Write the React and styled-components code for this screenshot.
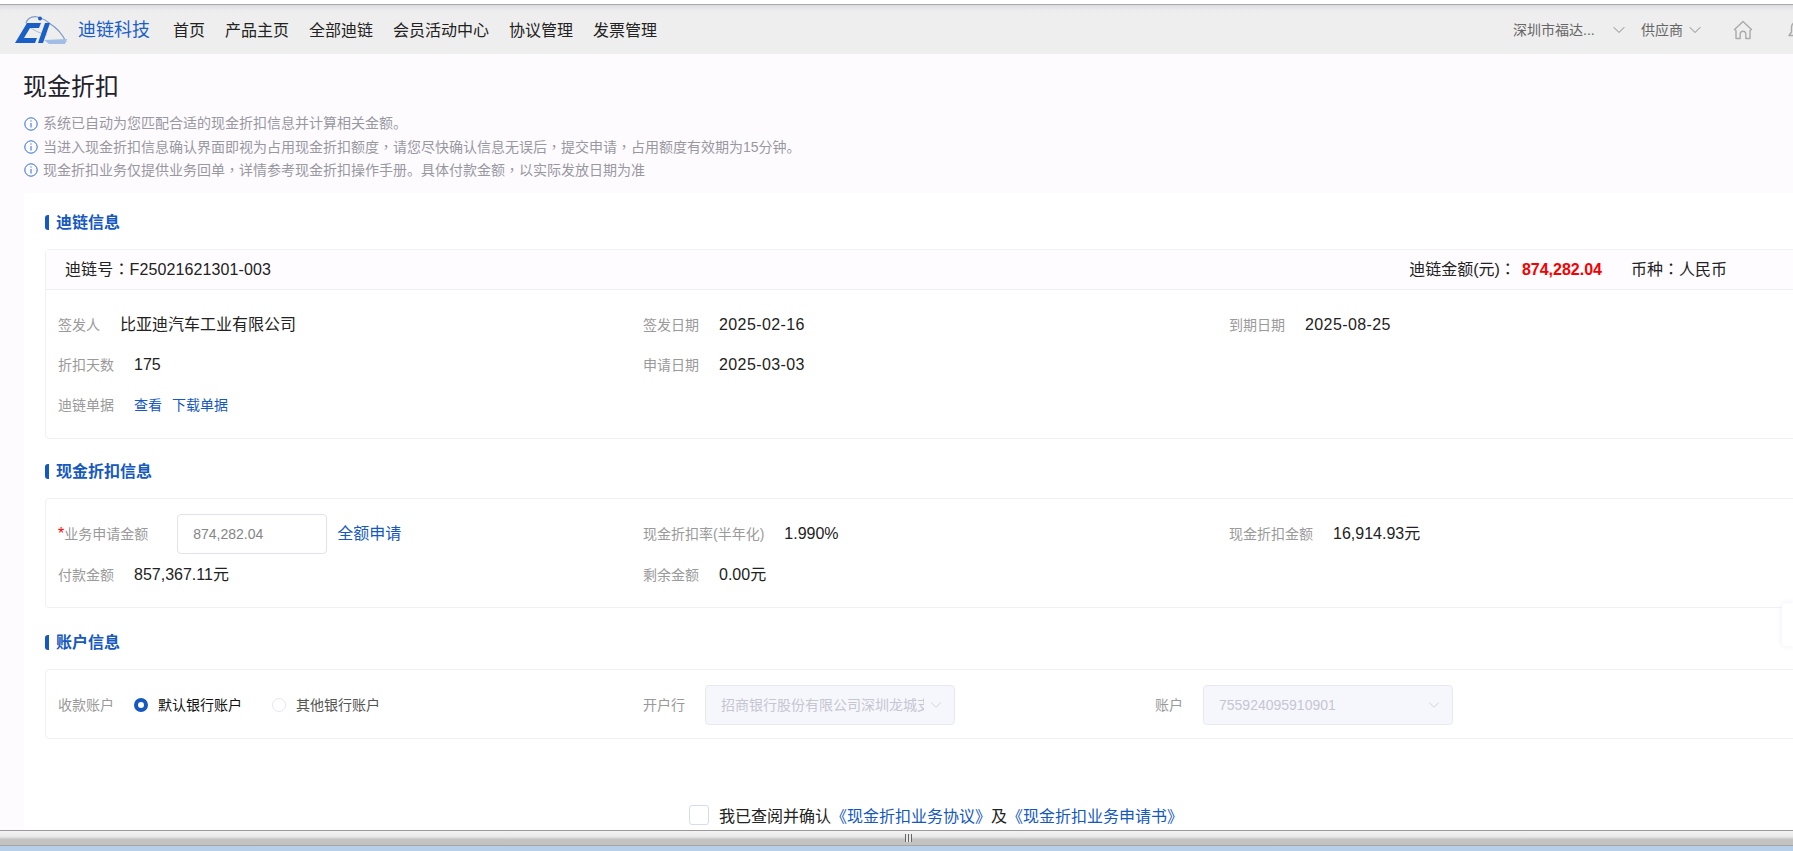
import React from 'react';
import styled, { createGlobalStyle } from 'styled-components';
import { ChevronDown } from 'lucide-react';

const Global = createGlobalStyle`
  html, body { margin: 0; padding: 0; height: 100%; overflow: hidden; background: #fff; }
  body { font-family: "Liberation Sans", "Noto Sans CJK SC", sans-serif; color: #222; line-height: 1.2; }
  *, *::before, *::after { box-sizing: border-box; }
`;

const Frame = styled.div`
  position: relative;
  height: 851px;
  width: 1793px;
  display: flex;
  flex-direction: column;
  overflow: hidden;
  background: #fff;
`;
const TopGap = styled.div`
  height: 4px;
  flex: none;
  background: #fff;
`;
const Header = styled.header`
  flex: none;
  width: 1821px;
  height: 50px;
  display: flex;
  align-items: center;
  padding: 0 14px 0 15px;
  border-top: 1px solid #a8a8a8;
  background: linear-gradient(#dcdcdf 0, #ececef 5px, #eeeeee 8px);
`;
const Brand = styled.div`
  display: flex;
  align-items: center;
  gap: 11px;
  margin-right: 23px;
`;
const BrandName = styled.span`
  font-size: 18px;
  color: #1a5fc6;
  padding-top: 2px;
`;
const Nav = styled.nav`
  display: flex;
  gap: 20px;
  padding-top: 2px;
`;
const NavItem = styled.a`
  font-size: 16px;
  color: #222;
`;
const HeaderRight = styled.div`
  margin-left: auto;
  display: flex;
  align-items: center;
  padding-top: 1px;
`;
const Org = styled.span`
  font-size: 14px;
  color: #666;
  width: ${p => p.$width}px;
  white-space: nowrap;
`;
const ChevronSlot = styled.span`
  display: flex;
  color: #666;
  margin-left: ${p => p.$left}px;
  margin-right: ${p => p.$right}px;
`;
const IconSlot = styled.span`
  display: flex;
  margin-left: ${p => p.$left || 0}px;
`;

const TitleBlock = styled.section`
  flex: none;
  height: 139px;
  padding: 19px 0 0 24px;
  background: #fefbff;
`;
const Title = styled.h1`
  margin: 0 0 11px -1px;
  font-size: 24px;
  line-height: 28px;
  font-weight: 400;
  color: #22222a;
`;
const Notice = styled.div`
  display: flex;
  align-items: center;
  gap: 5px;
  height: 23px;
  font-size: 14px;
  color: #98989f;
  white-space: nowrap;
`;
const Punct = styled.span`
  font-family: "Noto Sans CJK TC", sans-serif;
`;

const BodyWrap = styled.div`
  flex: 1;
  min-height: 0;
  padding-left: 24px;
  background: #fefbff;
`;
const Body = styled.main`
  display: flow-root;
  height: 100%;
  width: 1797px;
  padding-left: 21px;
  background: #fff;
`;
const SectionTitle = styled.h2`
  display: flex;
  align-items: center;
  gap: 7px;
  width: 1776px;
  height: 15px;
  margin: ${p => p.$top}px 0 19px;
  font-size: 16px;
  font-weight: 700;
  color: #1558bf;
  &::before {
    content: "";
    width: 4px;
    height: 15px;
    background: #1558bf;
    border-radius: 3px 0 0 3px;
  }
`;
const Card = styled.section`
  width: 1776px;
  border: 1px solid #f0eff6;
  border-radius: 4px;
  background: #fff;
`;
const CardHeader = styled.div`
  display: flex;
  align-items: center;
  height: 40px;
  padding: 0 93px 0 19px;
  font-size: 16px;
  border-bottom: 1px solid #f0eff6;
  background: #fefcff;
  color: #222;
  white-space: nowrap;
`;
const BillNo = styled.span`
  letter-spacing: 0.12px;
`;
const HeaderFacts = styled.div`
  margin-left: auto;
  display: flex;
  align-items: center;
`;
const Amount = styled.strong`
  color: #f60000;
  margin: 0 29px 0 6px;
  font-weight: 700;
`;
const CardBody = styled.div`
  padding: 15px 12px ${p => p.$bottom || 13}px;
`;
const Grid = styled.div`
  display: grid;
  grid-template-columns: 585px 586px 586px;
  row-gap: ${p => p.$rowGap || 0}px;
`;
const Field = styled.div`
  display: flex;
  align-items: center;
  gap: 20px;
  height: 40px;
  white-space: nowrap;
`;
const InputField = styled(Field)`
  gap: 0;
`;
const Label = styled.span`
  font-size: 14px;
  color: #9a9a9a;
`;
const Star = styled.span`
  color: #f00;
  font-size: 16px;
`;
const Value = styled.span`
  font-size: 16px;
  color: #222;
  letter-spacing: ${p => (p.$date ? '0.4px' : '0')};
`;
const LinkGroup = styled.div`
  display: flex;
  gap: 10px;
`;
const Link = styled.a`
  font-size: ${p => p.$size || 14}px;
  color: #1558bf;
`;
const AmountInput = styled.div`
  width: 150px;
  height: 40px;
  margin: 0 10px 0 29px;
  padding: 0 15px;
  display: flex;
  align-items: center;
  border: 1px solid #e2e2ec;
  border-radius: 4px;
  font-size: 14px;
  color: #858585;
`;

const AccountRow = styled.div`
  display: flex;
  align-items: center;
  height: 40px;
  white-space: nowrap;
`;
const AccountCol = styled.div`
  width: 585px;
  flex: none;
  display: flex;
  align-items: center;
  gap: 20px;
`;
const Radio = styled.span`
  display: inline-flex;
  align-items: center;
  gap: 10px;
  margin-right: 10px;
  font-size: 14px;
  color: ${p => (p.$on ? '#111' : '#555')};
  &::before {
    content: "";
    width: 14px;
    height: 14px;
    flex: none;
    border-radius: 50%;
    background: #fff;
    border: ${p => (p.$on ? '4px solid #1558bf' : '1px solid #e6e6ef')};
  }
`;
const SelectField = styled.div`
  display: flex;
  align-items: center;
  gap: 20px;
  margin-left: ${p => p.$left || 0}px;
`;
const Select = styled.div`
  width: 250px;
  height: 40px;
  padding: 0 9px 0 15px;
  display: flex;
  align-items: center;
  gap: 3px;
  border: 1px solid #e8e8f3;
  border-radius: 4px;
  background: #f6f7fd;
  color: #c6c6d1;
  font-size: 14px;
`;
const SelectText = styled.span`
  flex: 1;
  min-width: 0;
  overflow: hidden;
  white-space: nowrap;
`;
const Agreement = styled.div`
  width: 1776px;
  margin-top: 66px;
  padding-left: 6px;
  display: flex;
  justify-content: center;
  align-items: center;
  gap: 10px;
  height: 20px;
  font-size: 16px;
  color: #222;
  white-space: nowrap;
`;
const AgreementText = styled.span`
  padding-top: 3px;
`;
const Check = styled.span`
  width: 20px;
  height: 20px;
  border: 1px solid #d6dcf0;
  border-radius: 3px;
  background: #fff;
`;
const Scrollbar = styled.div`
  flex: none;
  height: 16px;
  display: flex;
  align-items: center;
  justify-content: center;
  padding-left: 24px;
  border-top: 1px solid #9a9a9a;
  border-bottom: 1px solid #a5a5a5;
  background: linear-gradient(#f3f3f3 0, #e9e9e9 40%, #c4c4c4 60%, #c2c2c2 100%);
`;
const Grip = styled.span`
  width: 7px;
  height: 8px;
  background: repeating-linear-gradient(90deg, #666 0 1px, #e8e8e8 1px 3px);
`;
const Desktop = styled.div`
  flex: none;
  height: 5px;
  background: #b8cfe9;
`;
const SideTab = styled.div`
  position: absolute;
  right: 0;
  top: 603px;
  width: 11px;
  height: 43px;
  background: #fff;
  border-radius: 4px 0 0 4px;
  box-shadow: 0 0 6px #ece9fb;
`;

const Logo = () => (
  <svg width="52" height="30" viewBox="0 0 52 30">
    <path d="M11 8 C13 2 20 0 25 3 C29 4 32 6 34 8 C42 13 48 20 51 27" fill="none" stroke="#7f9bc4" strokeWidth="1.2" />
    <path d="M11 8 C15 14 24 18 32 20" fill="none" stroke="#a9bfdf" strokeWidth="1" />
    <path d="M29 25 L52 24 L50 29 L34 29 Z" fill="#9fbde6" />
    <path d="M0 28 L12 8 H26 L24 13 H15 L9 23 H22 L20 28 Z" fill="#1a5fc6" />
    <path d="M30 8 H35 L28 28 H23 Z" fill="#1a5fc6" />
    <circle cx="25" cy="3.5" r="2" fill="#1a5fc6" />
  </svg>
);
const InfoIcon = () => (
  <svg width="14" height="14" viewBox="0 0 14 14" fill="none" stroke="#2a6fcf" strokeWidth="1">
    <circle cx="7" cy="7" r="6.2" />
    <path d="M7 6v4.5" />
    <path d="M7 3.4v1.2" />
  </svg>
);
const HomeIcon = () => (
  <svg width="20" height="20" viewBox="0 0 20 20" fill="none" stroke="#aaaaaa" strokeWidth="1.4" strokeLinejoin="round">
    <path d="M1.5 9.5 L10 1.5 L18.5 9.5 L17 10.5 V18.5 H12.8 V14 A2.8 2.8 0 0 0 7.2 14 V18.5 H3 V10.5 Z" />
  </svg>
);
const BellIcon = () => (
  <svg width="20" height="20" viewBox="0 0 20 20" fill="none" stroke="#aaaaaa" strokeWidth="1.4" strokeLinejoin="round">
    <path d="M10 2 C6 2 4.5 5 4.5 8 V12 L2 15.5 H18 L15.5 12 V8 C15.5 5 14 2 10 2 Z" />
    <path d="M8 18 H12" />
  </svg>
);

const withPunct = text =>
  text.split(/(，)/).map((part, i) => (part === '，' ? <Punct key={i}>，</Punct> : part));

const Notices = [
  '系统已自动为您匹配合适的现金折扣信息并计算相关金额。',
  '当进入现金折扣信息确认界面即视为占用现金折扣额度，请您尽快确认信息无误后，提交申请，占用额度有效期为15分钟。',
  '现金折扣业务仅提供业务回单，详情参考现金折扣操作手册。具体付款金额，以实际发放日期为准',
];
const NavItems = ['首页', '产品主页', '全部迪链', '会员活动中心', '协议管理', '发票管理'];

export default function App() {
  return (
    <Frame>
      <Global />
      <TopGap />
      <Header>
        <Brand>
          <Logo />
          <BrandName>迪链科技</BrandName>
        </Brand>
        <Nav>
          {NavItems.map(n => <NavItem key={n}>{n}</NavItem>)}
        </Nav>
        <HeaderRight>
          <Org $width={80}>深圳市福达...</Org>
          <ChevronSlot $left={16} $right={12}><ChevronDown size={20} strokeWidth={0.9} /></ChevronSlot>
          <Org $width={42}>供应商</Org>
          <ChevronSlot $left={2} $right={0}><ChevronDown size={20} strokeWidth={0.9} /></ChevronSlot>
          <IconSlot $left={28}><HomeIcon /></IconSlot>
          <IconSlot $left={34}><BellIcon /></IconSlot>
        </HeaderRight>
      </Header>
      <TitleBlock>
        <Title>现金折扣</Title>
        {Notices.map(n => (
          <Notice key={n}><InfoIcon /><span>{withPunct(n)}</span></Notice>
        ))}
      </TitleBlock>
      <BodyWrap>
        <Body>
          <SectionTitle $top={22}>迪链信息</SectionTitle>
          <Card>
            <CardHeader>
              <BillNo>迪链号<Punct>：</Punct>F25021621301-003</BillNo>
              <HeaderFacts>
                <span>迪链金额(元)<Punct>：</Punct></span>
                <Amount>874,282.04</Amount>
                <span>币种<Punct>：</Punct>人民币</span>
              </HeaderFacts>
            </CardHeader>
            <CardBody>
              <Grid>
                <Field><Label>签发人</Label><Value>比亚迪汽车工业有限公司</Value></Field>
                <Field><Label>签发日期</Label><Value $date>2025-02-16</Value></Field>
                <Field><Label>到期日期</Label><Value $date>2025-08-25</Value></Field>
                <Field><Label>折扣天数</Label><Value>175</Value></Field>
                <Field><Label>申请日期</Label><Value $date>2025-03-03</Value></Field>
                <Field />
                <Field>
                  <Label>迪链单据</Label>
                  <LinkGroup><Link>查看</Link><Link>下载单据</Link></LinkGroup>
                </Field>
              </Grid>
            </CardBody>
          </Card>

          <SectionTitle $top={25}>现金折扣信息</SectionTitle>
          <Card>
            <CardBody $bottom={12}>
              <Grid $rowGap={1}>
                <InputField>
                  <Label><Star>*</Star>业务申请金额</Label>
                  <AmountInput>874,282.04</AmountInput>
                  <Link $size={16}>全额申请</Link>
                </InputField>
                <Field><Label>现金折扣率(半年化)</Label><Value>1.990%</Value></Field>
                <Field><Label>现金折扣金额</Label><Value>16,914.93元</Value></Field>
                <Field><Label>付款金额</Label><Value>857,367.11元</Value></Field>
                <Field><Label>剩余金额</Label><Value>0.00元</Value></Field>
              </Grid>
            </CardBody>
          </Card>

          <SectionTitle $top={27}>账户信息</SectionTitle>
          <Card>
            <CardBody>
              <AccountRow>
                <AccountCol>
                  <Label>收款账户</Label>
                  <Radio $on>默认银行账户</Radio>
                  <Radio>其他银行账户</Radio>
                </AccountCol>
                <SelectField>
                  <Label>开户行</Label>
                  <Select>
                    <SelectText>招商银行股份有限公司深圳龙城支行</SelectText>
                    <ChevronDown size={18} strokeWidth={1} />
                  </Select>
                </SelectField>
                <SelectField $left={200}>
                  <Label>账户</Label>
                  <Select>
                    <SelectText>755924095910901</SelectText>
                    <ChevronDown size={18} strokeWidth={1} />
                  </Select>
                </SelectField>
              </AccountRow>
            </CardBody>
          </Card>

          <Agreement>
            <Check />
            <AgreementText>我已查阅并确认<Link $size={16}>《现金折扣业务协议》</Link>及<Link $size={16}>《现金折扣业务申请书》</Link></AgreementText>
          </Agreement>
        </Body>
      </BodyWrap>
      <Scrollbar><Grip /></Scrollbar>
      <Desktop />
      <SideTab />
    </Frame>
  );
}
